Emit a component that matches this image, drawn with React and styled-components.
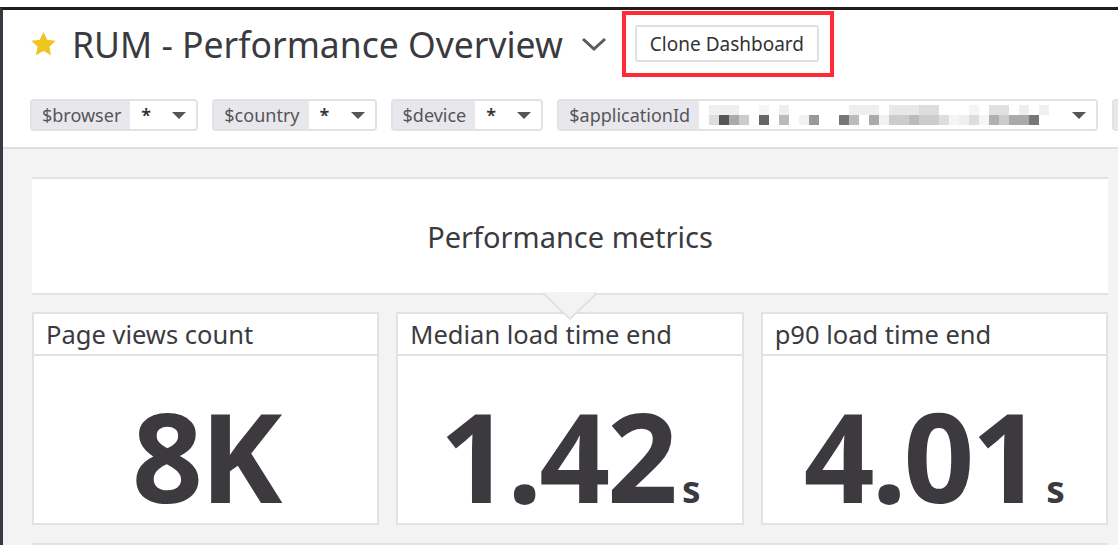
import styled, { createGlobalStyle } from "styled-components";

const GlobalStyle = createGlobalStyle`
  body {
    margin: 0;
    overflow: hidden;
    font-family: "Noto Sans", "Open Sans", sans-serif;
    color: #3b3a40;
  }
`;

const Page = styled.div`
  width: 1118px;
  height: 545px;
  padding-top: 7px;
  box-sizing: border-box;
  background: #fff;
  overflow: hidden;
`;

const Frame = styled.div`
  height: 100%;
  border-top: 3px solid #1e1e20;
  border-left: 3px solid #3c3743;
  display: flex;
  flex-direction: column;
`;

const Header = styled.div`
  flex-shrink: 0;
  background: #fff;
  padding: 1px 0 16px 27px;
  border-bottom: 2px solid #e0dfe4;
  overflow: hidden;
`;

const TitleRow = styled.div`
  display: flex;
  align-items: center;
  height: 66px;
`;

const Title = styled.h1`
  margin: 0 0 0 15px;
  font-size: 35.5px;
  font-weight: 400;
  color: #3b3a40;
  white-space: nowrap;
`;

const Highlight = styled.div`
  margin-left: 15px;
  border: 4px solid #ff2a35;
  padding: 10px 11px 11px 9px;
`;

const CloneButton = styled.button`
  height: 37px;
  padding: 0 13px;
  background: #fff;
  border: 2px solid #e0dfe4;
  border-radius: 3px;
  font-family: inherit;
  font-size: 19px;
  color: #333;
`;

const FilterRow = styled.div`
  display: flex;
  gap: 14px;
  margin-top: 22px;
  flex-wrap: nowrap;
`;

const Filter = styled.div`
  display: flex;
  flex-shrink: 0;
  height: 32px;
  box-sizing: border-box;
  border: 2px solid #e2e1e6;
  border-radius: 4px;
  overflow: hidden;
`;

const FilterLabel = styled.div`
  display: flex;
  align-items: center;
  min-width: 20px;
  padding: 0 9px 0 10px;
  background: #e8e8ec;
  color: #56555b;
  font-size: 18px;
`;

const FilterValue = styled.div`
  display: flex;
  align-items: center;
  justify-content: space-between;
  width: ${(p) => p.$width}px;
  padding: 0 10px 0 11px;
  box-sizing: border-box;
  background: #fff;
  font-size: 18px;
  font-weight: 600;
  color: #333;
`;

const Caret = styled.span`
  width: 0;
  height: 0;
  border-left: 7px solid transparent;
  border-right: 7px solid transparent;
  border-top: 7px solid #555;
`;

const Redacted = styled.div`
  display: grid;
  grid-template-columns: repeat(34, 10px);
  grid-auto-rows: 10px;
  margin-left: -1px;
`;

const Pixel = styled.span`
  background: ${(p) => p.$c};
`;

const Content = styled.div`
  flex: 1;
  min-height: 0;
  overflow: hidden;
  background: #f3f3f4;
  padding: 28px 10px 0 29px;
`;

const GroupHeader = styled.div`
  position: relative;
  height: 114px;
  display: flex;
  align-items: center;
  justify-content: center;
  background: #fff;
  border-top: 2px solid #e2e1e6;
  border-bottom: 2px solid #e2e1e6;
  font-size: 29px;
  color: #3b3a40;
  z-index: 1;
`;

const Tail = styled.svg`
  position: absolute;
  left: 50%;
  bottom: -29px;
  transform: translateX(-50%);
`;

const MetricGrid = styled.div`
  display: grid;
  grid-template-columns: repeat(3, 1fr);
  gap: 17px;
  margin-top: 17px;
`;

const Card = styled.div`
  background: #fff;
  border: 2px solid #e2e1e6;
  height: 213px;
  box-sizing: border-box;
  display: flex;
  flex-direction: column;
`;

const CardTitle = styled.div`
  height: 40px;
  display: flex;
  align-items: center;
  padding-left: 12px;
  border-bottom: 2px solid #e2e1e6;
  font-size: 25.5px;
  color: #3b3a40;
  white-space: nowrap;
`;

const CardBody = styled.div`
  flex: 1;
  display: flex;
  justify-content: center;
  align-items: flex-start;
  padding-top: 37px;
`;

const Value = styled.div`
  display: flex;
  align-items: baseline;
  line-height: 1;
  font-size: 124px;
  font-weight: 700;
  letter-spacing: -3px;
  color: #3c3a3f;
`;

const Unit = styled.span`
  font-size: 37px;
  margin-left: 7px;
  letter-spacing: 0;
`;

const NextCard = styled.div`
  margin-top: 18px;
  height: 40px;
  background: #fff;
  border-top: 2px solid #e2e1e6;
  border-left: 2px solid #e2e1e6;
`;

const topRow = {
  0: "#f0f0f0", 1: "#eee", 2: "#eee", 5: "#f5f5f5", 7: "#eee",
  14: "#eee", 15: "#eee", 16: "#eee", 18: "#e8e8e8", 19: "#e8e8e8",
  20: "#e8e8e8", 21: "#ddd", 22: "#ddd", 26: "#f5f5f5", 28: "#e0e0e0",
  29: "#e0e0e0", 31: "#eee", 33: "#f0f0f0",
};

const bottomRow = [
  "#ddd", "#555", "#aaa", "#ccc", "#fff", "#666", "#fff", "#bbb", "#fff",
  "#f2f2f2", "#999", "#fff", "#fff", "#777", "#bbb", "#fff", "#aaa",
  "#f2f2f2", "#ccc", "#ccc", "#bbb", "#ccc", "#ccc", "#ddd", "#f5f5f5",
  "#f0f0f0", "#ddd", "#f5f5f5", "#b0b0b0", "#ccc", "#aaa", "#aaa", "#777",
  "#fff",
];

const filters = [
  { name: "$browser", value: "*", width: 66 },
  { name: "$country", value: "*", width: 66 },
  { name: "$device", value: "*", width: 66 },
  { name: "$applicationId", redacted: true, width: 397 },
  { name: "", value: "", width: 66 },
];

const metrics = [
  { title: "Page views count", value: "8K" },
  { title: "Median load time end", value: "1.42", unit: "s" },
  { title: "p90 load time end", value: "4.01", unit: "s" },
];

const Star = () => (
  <svg width="27" height="26" viewBox="0 0 24 23">
    <path
      d="M12 0.8l3.3 6.9 7.5 1-5.5 5.2 1.4 7.5L12 17.8l-6.7 3.6 1.4-7.5L1.2 8.7l7.5-1z"
      fill="#f1c521"
    />
  </svg>
);

const Chevron = () => (
  <svg width="26" height="16" viewBox="0 0 26 16" style={{ marginLeft: 18 }}>
    <path d="M2 3l11 10L24 3" fill="none" stroke="#5a595e" strokeWidth="3" />
  </svg>
);

export default function App() {
  return (
    <Page>
      <GlobalStyle />
      <Frame>
        <Header>
          <TitleRow>
            <Star />
            <Title>RUM - Performance Overview</Title>
            <Chevron />
            <Highlight>
              <CloneButton>Clone Dashboard</CloneButton>
            </Highlight>
          </TitleRow>
          <FilterRow>
            {filters.map((f, i) => (
              <Filter key={i}>
                <FilterLabel>{f.name}</FilterLabel>
                <FilterValue $width={f.width}>
                  {f.redacted ? (
                    <Redacted>
                      {bottomRow.map((_, j) => (
                        <Pixel key={"t" + j} $c={topRow[j] || "#fff"} />
                      ))}
                      {bottomRow.map((c, j) => (
                        <Pixel key={"b" + j} $c={c} />
                      ))}
                    </Redacted>
                  ) : (
                    <span>{f.value}</span>
                  )}
                  <Caret />
                </FilterValue>
              </Filter>
            ))}
          </FilterRow>
        </Header>
        <Content>
          <GroupHeader>
            Performance metrics
            <Tail width="54" height="30" viewBox="0 0 54 30">
              <polygon points="0,0 54,0 27,27" fill="#f3f3f4" />
              <polyline
                points="0,1 27,27 54,1"
                fill="none"
                stroke="#dcdbe0"
                strokeWidth="1.5"
              />
            </Tail>
          </GroupHeader>
          <MetricGrid>
            {metrics.map((m) => (
              <Card key={m.title}>
                <CardTitle>{m.title}</CardTitle>
                <CardBody>
                  <Value>
                    {m.value}
                    {m.unit && <Unit>{m.unit}</Unit>}
                  </Value>
                </CardBody>
              </Card>
            ))}
          </MetricGrid>
          <NextCard />
        </Content>
      </Frame>
    </Page>
  );
}
